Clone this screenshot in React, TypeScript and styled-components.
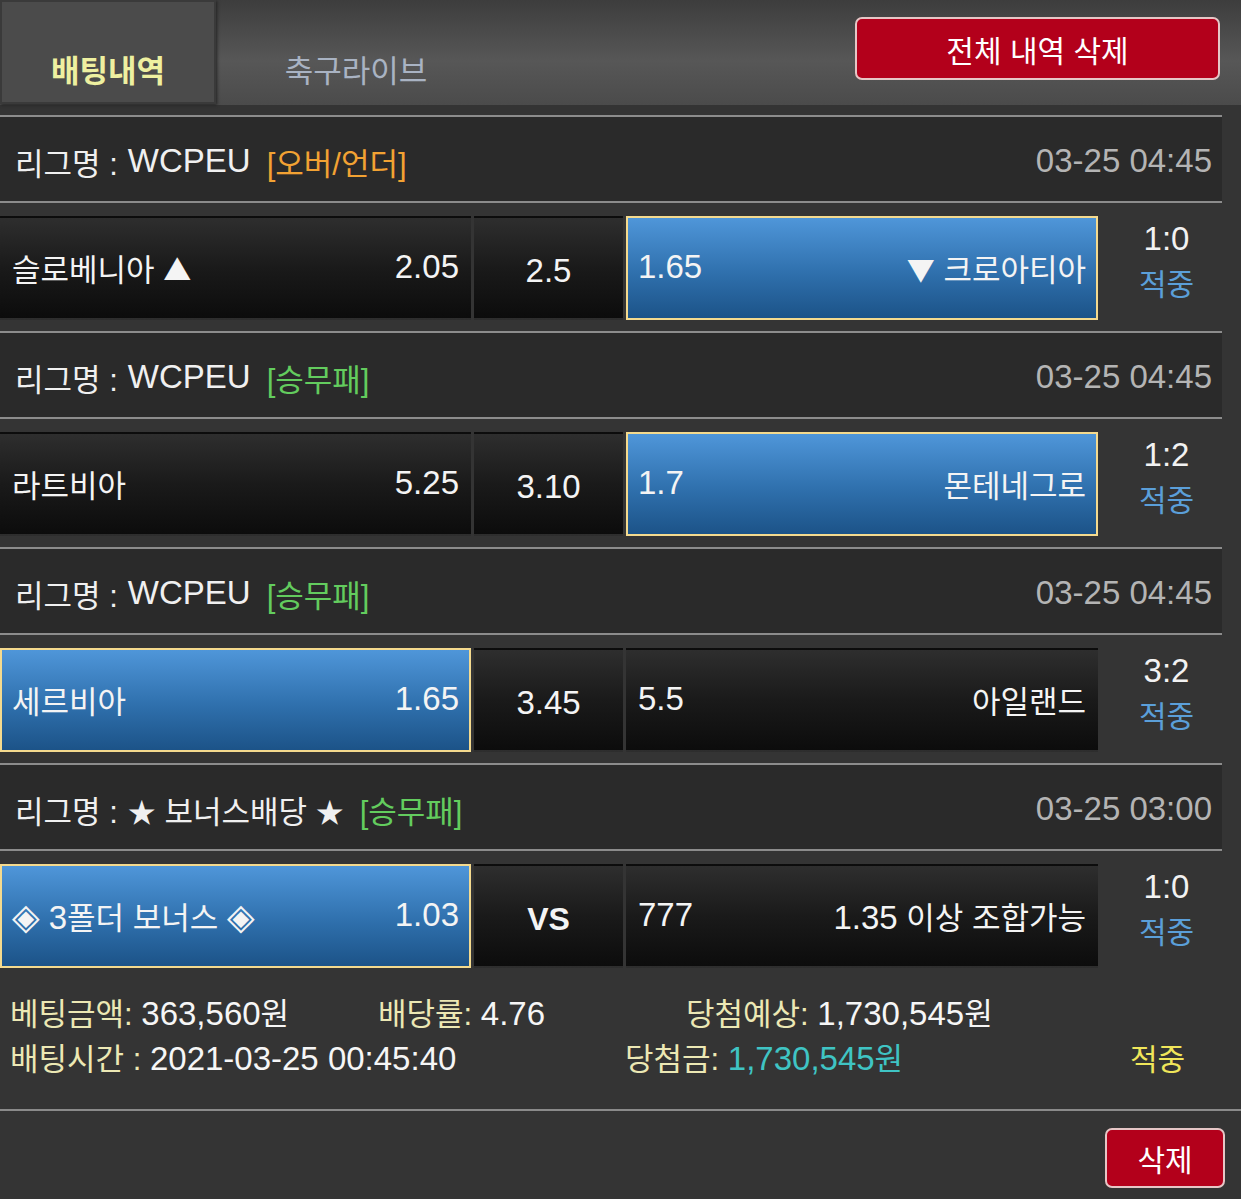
import styled, { createGlobalStyle } from 'styled-components';

const GlobalStyle = createGlobalStyle`
    html, body {
        margin: 0;
        padding: 0;
        background: #343434;
    }
    body {
        font-family: "Liberation Sans", "Noto Sans CJK KR", sans-serif;
        color: #f2f2f2;
    }
`;

const Page = styled.div`
    width: 1241px;
    min-height: 1199px;
    background: #343434;
    font-size: 31px;
`;

const Num = styled.span`
    font-size: 33px;
`;

// symbols (▲ ▼ ◈ ★) come from the CJK font, where they are full width
const Sym = styled.span<{ $big?: boolean }>`
    font-family: "Noto Sans CJK KR", sans-serif;
    font-size: ${(p) => (p.$big ? 36 : 28)}px;
    line-height: 1;
`;

const TopBar = styled.div`
    height: 105px;
    display: flex;
    align-items: flex-start;
    background: linear-gradient(#3d3d3d, #575757 58%, #4b4b4b);
`;

const Tab = styled.div<{ $active?: boolean }>`
    width: ${(p) => (p.$active ? 216 : 280)}px;
    height: 104px;
    box-sizing: border-box;
    display: flex;
    align-items: center;
    justify-content: center;
    padding-top: 32px;
    font-size: 31px;
    color: ${(p) => (p.$active ? '#eef0a0' : '#a9b3c3')};
    font-weight: ${(p) => (p.$active ? 700 : 400)};
    background: ${(p) => (p.$active ? '#4b4b4b' : 'transparent')};
    box-shadow: ${(p) => (p.$active ? 'inset 0 0 0 2px #3a3a3a, 1px 1px 3px #222' : 'none')};
`;

const RedButton = styled.button<{ $wide?: boolean }>`
    box-sizing: border-box;
    width: ${(p) => (p.$wide ? 365 : 120)}px;
    height: ${(p) => (p.$wide ? 63 : 60)}px;
    background: #b3001b;
    border: 2px solid #e6c6c6;
    border-radius: 7px;
    color: #fff;
    font-family: inherit;
    font-size: 30px;
    padding: 0;
    cursor: pointer;
`;

const TopActions = styled.div`
    margin-left: auto;
    padding: 17px 21px 0 0;
`;

const List = styled.div`
    width: 1222px;
    padding-top: 10px;
`;

const LeagueHeader = styled.div`
    box-sizing: border-box;
    height: 88px;
    border-top: 2px solid #8c8c8c;
    border-bottom: 2px solid #8c8c8c;
    background: #2a2a2a;
    display: flex;
    align-items: center;
    justify-content: space-between;
    padding: 4px 10px 0 15px;
`;

const LeagueName = styled.div`
    display: flex;
    align-items: center;
    gap: 10px;
    color: #f0f0f0;
    white-space: pre;
`;

const Tag = styled.span<{ $color: string }>`
    color: ${(p) => p.$color};
    margin-left: 6px;
`;

const DateText = styled(Num)`
    color: #b4b4b4;
`;

const MatchRow = styled.div`
    display: grid;
    grid-template-columns: 471px 149px 472px 1fr;
    column-gap: 3px;
    padding: 13px 0 11px;
`;

const Cell = styled.div<{ $selected?: boolean; $center?: boolean }>`
    box-sizing: border-box;
    height: 104px;
    display: flex;
    align-items: center;
    justify-content: ${(p) => (p.$center ? 'center' : 'space-between')};
    padding: ${(p) => (p.$center ? '6px 0 0' : '0 10px 2px')};
    border: 2px solid ${(p) => (p.$selected ? '#f4da8e' : 'transparent')};
    background: ${(p) =>
        p.$selected
            ? 'linear-gradient(#4f96d9, #2f70ad 55%, #1c5388)'
            : 'linear-gradient(#2e2e2e, #1a1a1a 50%, #0c0c0c)'};
    color: #f4f4f4;
    white-space: pre;
`;

const Vs = styled.span`
    font-size: 32px;
    font-weight: 700;
`;

const Result = styled.div`
    display: flex;
    flex-direction: column;
    align-items: center;
    justify-content: center;
    line-height: 46px;
    padding: 0 0 12px 10px;
`;

const Hit = styled.span<{ $color: string }>`
    color: ${(p) => p.$color};
    font-size: 30px;
`;

const Summary = styled.div`
    border-bottom: 2px solid #8a8a8a;
    padding: 13px 0 27px 10px;
    line-height: 44px;
`;

const SummaryLine = styled.div`
    display: flex;
    align-items: center;
`;

const Item = styled.div<{ $w?: number }>`
    width: ${(p) => (p.$w ? `${p.$w}px` : 'auto')};
    white-space: nowrap;
`;

const Label = styled.span`
    color: #ece8b4;
`;

const Value = styled.span<{ $color?: string }>`
    color: ${(p) => p.$color ?? '#f6f6f6'};
`;

const BottomBar = styled.div`
    display: flex;
    justify-content: flex-end;
    padding: 17px 16px 0;
`;

type Match = {
    league: string;
    tag: string;
    tagColor: string;
    date: string;
    home: string;
    homeOdds: string;
    draw: string;
    away: string;
    awayOdds: string;
    pick: 'home' | 'away';
    score: string;
    vs?: boolean;
};

const ORANGE = '#f2a233';
const GREEN = '#63cc5e';

const matches: Match[] = [
    {
        league: 'WCPEU',
        tag: '[오버/언더]',
        tagColor: ORANGE,
        date: '03-25 04:45',
        home: '슬로베니아 ▲',
        homeOdds: '2.05',
        draw: '2.5',
        away: '▼ 크로아티아',
        awayOdds: '1.65',
        pick: 'away',
        score: '1:0',
    },
    {
        league: 'WCPEU',
        tag: '[승무패]',
        tagColor: GREEN,
        date: '03-25 04:45',
        home: '라트비아',
        homeOdds: '5.25',
        draw: '3.10',
        away: '몬테네그로',
        awayOdds: '1.7',
        pick: 'away',
        score: '1:2',
    },
    {
        league: 'WCPEU',
        tag: '[승무패]',
        tagColor: GREEN,
        date: '03-25 04:45',
        home: '세르비아',
        homeOdds: '1.65',
        draw: '3.45',
        away: '아일랜드',
        awayOdds: '5.5',
        pick: 'home',
        score: '3:2',
    },
    {
        league: '★ 보너스배당 ★',
        tag: '[승무패]',
        tagColor: GREEN,
        date: '03-25 03:00',
        home: '◈ 3폴더 보너스 ◈',
        homeOdds: '1.03',
        draw: 'VS',
        away: '1.35 이상 조합가능',
        awayOdds: '777',
        pick: 'home',
        score: '1:0',
        vs: true,
    },
];

// split out symbols and digit runs so each gets its own font size
const Rich = ({ text }: { text: string }) => (
    <>
        {text.split(/([▲▼◈★]|[0-9A-Z.,:\-]+)/).map((part, i) => {
            if (!part) return null;
            if (/^[▲▼◈★]$/.test(part))
                return (
                    <Sym key={i} $big={part === '◈'}>
                        {part}
                    </Sym>
                );
            if (/^[0-9A-Z.,:\-]+$/.test(part)) return <Num key={i}>{part}</Num>;
            return <span key={i}>{part}</span>;
        })}
    </>
);

const MatchBlock = ({ m }: { m: Match }) => (
    <>
        <LeagueHeader>
            <LeagueName>
                <span>리그명 :</span>
                <span>
                    <Rich text={m.league} />
                </span>
                <Tag $color={m.tagColor}>{m.tag}</Tag>
            </LeagueName>
            <DateText>{m.date}</DateText>
        </LeagueHeader>
        <MatchRow>
            <Cell $selected={m.pick === 'home'}>
                <span>
                    <Rich text={m.home} />
                </span>
                <Num>{m.homeOdds}</Num>
            </Cell>
            <Cell $center>{m.vs ? <Vs>{m.draw}</Vs> : <Num>{m.draw}</Num>}</Cell>
            <Cell $selected={m.pick === 'away'}>
                <Num>{m.awayOdds}</Num>
                <span>
                    <Rich text={m.away} />
                </span>
            </Cell>
            <Result>
                <Num>{m.score}</Num>
                <Hit $color="#5b9fd9">적중</Hit>
            </Result>
        </MatchRow>
    </>
);

export default function App() {
    return (
        <Page>
            <GlobalStyle />
            <TopBar>
                <Tab $active>배팅내역</Tab>
                <Tab>축구라이브</Tab>
                <TopActions>
                    <RedButton $wide>전체 내역 삭제</RedButton>
                </TopActions>
            </TopBar>

            <List>
                {matches.map((m, i) => (
                    <MatchBlock key={i} m={m} />
                ))}
            </List>

            <Summary>
                <SummaryLine>
                    <Item $w={368}>
                        <Label>베팅금액: </Label>
                        <Value>
                            <Num>363,560</Num>원
                        </Value>
                    </Item>
                    <Item $w={308}>
                        <Label>배당률: </Label>
                        <Value>
                            <Num>4.76</Num>
                        </Value>
                    </Item>
                    <Item>
                        <Label>당첨예상: </Label>
                        <Value>
                            <Num>1,730,545</Num>원
                        </Value>
                    </Item>
                </SummaryLine>
                <SummaryLine>
                    <Item $w={615}>
                        <Label>배팅시간 : </Label>
                        <Value>
                            <Num>2021-03-25 00:45:40</Num>
                        </Value>
                    </Item>
                    <Item $w={505}>
                        <Label>당첨금: </Label>
                        <Value $color="#3fc4c4">
                            <Num>1,730,545</Num>원
                        </Value>
                    </Item>
                    <Item>
                        <Hit $color="#f0e65a">적중</Hit>
                    </Item>
                </SummaryLine>
            </Summary>

            <BottomBar>
                <RedButton>삭제</RedButton>
            </BottomBar>
        </Page>
    );
}
